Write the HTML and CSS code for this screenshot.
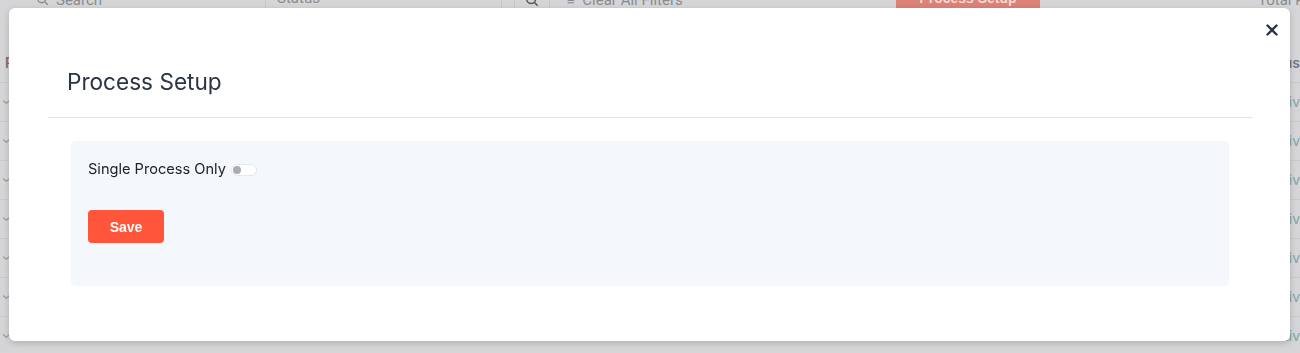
FILE: index.html
```html
<html><head><meta charset="utf-8">
<title>Process Setup</title>
<link rel="stylesheet" href="styles.css">
</head><body>
<div class="page">
  <div class="toolbar">
    <div class="search-box">
      <svg width="13" height="13" viewBox="0 0 16 16"><circle cx="7" cy="7" r="5" fill="none" stroke="#8a8b8f" stroke-width="1.6"/><path d="M11 11l3.5 3.5" stroke="#8a8b8f" stroke-width="1.6"/></svg>
      <span>Search</span>
    </div>
    <div class="status-box">Status</div>
    <div class="search-btn">
      <svg width="14" height="14" viewBox="0 0 16 16"><circle cx="7" cy="7" r="5" fill="none" stroke="#5b5c60" stroke-width="1.8"/><path d="M11 11l3.5 3.5" stroke="#5b5c60" stroke-width="1.8"/></svg>
    </div>
    <div class="clear-filters"><span class="filter-icon">&#8801;</span> Clear All Filters</div>
    <div class="spacer"></div>
    <div class="setup-btn">Process Setup</div>
    <div class="total">Total Processes</div>
  </div>
  <div class="table">
    <div class="row head"><span class="first">Process</span><span class="last">Status</span></div>
    <div class="row"><span class="chev">&#8250;</span><span class="active">Active</span></div>
    <div class="row"><span class="chev">&#8250;</span><span class="active">Active</span></div>
    <div class="row"><span class="chev">&#8250;</span><span class="active">Active</span></div>
    <div class="row"><span class="chev">&#8250;</span><span class="active">Active</span></div>
    <div class="row"><span class="chev">&#8250;</span><span class="active">Active</span></div>
    <div class="row"><span class="chev">&#8250;</span><span class="active">Active</span></div>
    <div class="row"><span class="chev">&#8250;</span><span class="active">Active</span></div>
  </div>
</div>

<div class="overlay">
  <div class="modal">
    <button class="close" aria-label="Close">
      <svg width="12" height="12" viewBox="0 0 12 12"><path d="M1.5 1.5l9 9M10.5 1.5l-9 9" stroke="#2b3443" stroke-width="2.4" stroke-linecap="round"/></svg>
    </button>
    <div class="modal-header">
      <h2>Process Setup</h2>
    </div>
    <div class="modal-body">
      <div class="setting">
        <label>Single Process Only</label>
        <span class="toggle"><span class="knob"></span></span>
      </div>
      <button class="save">Save</button>
    </div>
  </div>
</div>
</body></html>
```

FILE: styles.css
```css
body {
  margin: 0;
  font-family: Inter, "Noto Sans", sans-serif;
  background-color: #d5d5d7;
  overflow: hidden;
}
.page {
  margin-top: -11px;
  color: #8a8b8f;
}
.toolbar {
  display: flex;
  align-items: center;
  height: 21px;
  font-family: Roboto, sans-serif;
  font-size: 15px;
}
.search-box {
  display: flex;
  align-items: center;
  gap: 7px;
  margin-left: 28px;
  width: 229px;
  padding-left: 8px;
  height: 100%;
  border-right: 1px solid #c6c6c9;
}
.status-box {
  width: 224px;
  padding-left: 11px;
  height: 100%;
  border-right: 1px solid #c6c6c9;
}
.search-btn {
  display: flex;
  align-items: center;
  justify-content: center;
  margin-left: 12px;
  width: 34px;
  height: 100%;
  border-left: 1px solid #c6c6c9;
  border-right: 1px solid #c6c6c9;
}
.clear-filters {
  margin-left: 17px;
}
.filter-icon {
  font-size: 13px;
  margin-right: 4px;
}
.spacer {
  flex: 1;
}
.setup-btn {
  width: 144px;
  height: 26px;
  margin-top: -4px;
  background-color: #dc8276;
  color: #f3d9d4;
  font-family: "Liberation Sans", Arial, sans-serif;
  font-weight: bold;
  font-size: 14px;
  text-align: center;
  line-height: 26px;
  border-radius: 3px;
  margin-right: 218px;
}
.total {
  white-space: nowrap;
  width: 42px;
  overflow: hidden;
}
.table {
  margin-top: 41px;
  font-size: 14px;
}
.row {
  display: flex;
  justify-content: space-between;
  height: 38px;
  line-height: 38px;
  border-bottom: 1px solid #c9c9cc;
}
.row.head {
  height: 31px;
  line-height: 24px;
  color: #8e6a71;
  font-weight: 600;
}
.first {
  margin-left: 5px;
}
.last {
  margin-right: 0;
  color: #6d7486;
}
.chev {
  margin-left: 4px;
  color: #9a9a9e;
  transform: rotate(90deg);
  display: inline-block;
}
.active {
  color: #7ea7a2;
  margin-right: -8px;
}
.overlay {
  position: fixed;
  inset: 0;
  padding: 8px 10px 0 9px;
}
.modal {
  position: relative;
  background-color: #fff;
  height: 333px;
  border-radius: 6px;
  box-shadow: 0 2px 6px rgba(0,0,0,0.18);
  box-sizing: border-box;
  padding: 0 38px 0 39px;
}
.close {
  position: absolute;
  top: 16px;
  right: 12px;
  border: none;
  background: none;
  padding: 0;
  cursor: pointer;
  line-height: 0;
}
.modal-header {
  padding: 60px 0 0 19px;
  height: 49px;
  border-bottom: 1px solid #dee2e6;
}
.modal-header h2 {
  margin: 0;
  font-size: 22.6px;
  font-weight: 400;
  line-height: 28px;
  color: #2b3443;
}
.modal-body {
  margin: 23px 23px 0 23px;
  background-color: #f4f7fb;
  border-radius: 5px;
  height: 145px;
  box-sizing: border-box;
  padding: 18px 17px;
}
.setting {
  display: flex;
  align-items: center;
  gap: 5px;
  font-size: 14.6px;
  color: #212529;
  height: 20px;
}
.toggle {
  position: relative;
  display: inline-block;
  width: 24px;
  height: 10px;
  margin-top: 2px;
  background-color: #fff;
  border: 1px solid #e4e7ec;
  border-radius: 6px;
}
.knob {
  position: absolute;
  left: 1px;
  top: 1px;
  width: 8px;
  height: 8px;
  border-radius: 50%;
  background-color: #a9abaf;
}
.save {
  display: block;
  margin-top: 31px;
  width: 76px;
  height: 33px;
  border: none;
  border-radius: 4px;
  background-color: #ff563b;
  color: #fff;
  font-family: "Liberation Sans", Arial, sans-serif;
  font-weight: bold;
  font-size: 14px;
  cursor: pointer;
}
```
